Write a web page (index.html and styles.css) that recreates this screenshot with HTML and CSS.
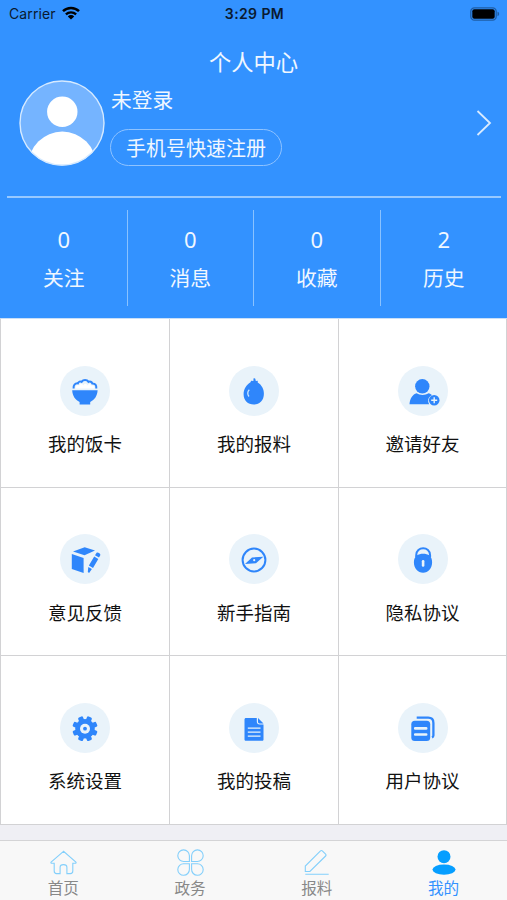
FILE: index.html
```html
<!DOCTYPE html>
<html lang="zh-CN">
<head>
    <meta charset="UTF-8">
    <meta name="viewport" content="width=device-width, initial-scale=1.0">
    <title>个人中心</title>
    <link rel="stylesheet" href="styles.css">
</head>
<body>
    <!-- 顶部个人信息 -->
    <header class="header">
        <div class="status-bar">
            <div class="status-left">
                <span>Carrier</span>
                <svg class="wifi" viewBox="0 0 18 14">
                    <path d="M1 5.2a11.4 11.4 0 0 1 16 0" fill="none" stroke="#000" stroke-width="2.5"/>
                    <path d="M3.9 8.4a7.3 7.3 0 0 1 10.2 0" fill="none" stroke="#000" stroke-width="2.3"/>
                    <path d="M9 13.6l-3.2-3.2a4.6 4.6 0 0 1 6.4 0z"/>
                </svg>
            </div>
            <span class="status-time">3:29 PM</span>
            <svg class="battery" viewBox="0 0 30 14">
                <rect x=".8" y=".8" width="25.4" height="12.4" rx="3.6" fill="none" stroke="#1f5da5" stroke-width="1.3"/>
                <rect x="2.3" y="2.3" width="22.4" height="9.4" rx="2"/>
                <path d="M27.5 4.8c2.2.6 2.2 3.8 0 4.4z" fill="#1f5da5"/>
            </svg>
        </div>
        <h1 class="page-title">个人中心</h1>
        <div class="profile">
            <svg class="avatar" viewBox="0 0 86 86">
                <defs>
                    <clipPath id="avatarClip"><circle cx="43" cy="43" r="42.5"/></clipPath>
                </defs>
                <circle cx="43" cy="43" r="42" fill="#75b4ff"/>
                <g clip-path="url(#avatarClip)" fill="#fff">
                    <circle cx="43.3" cy="31.8" r="15.2"/>
                    <ellipse cx="43.3" cy="86" rx="34" ry="34.5"/>
                </g>
                <circle cx="43" cy="43" r="42" fill="none" stroke="#d6eaff" stroke-width="1.4"/>
            </svg>
            <div class="profile-info">
                <p class="profile-name">未登录</p>
                <a href="#" class="register-btn">手机号快速注册</a>
            </div>
            <svg class="arrow" viewBox="0 0 16 26">
                <path d="M1.5 1L14 13 1.5 25" fill="none" stroke="#d9ebff" stroke-width="1.8"/>
            </svg>
        </div>
        <div class="stats">
            <div class="stat"><span class="stat-num">0</span><span>关注</span></div>
            <div class="stat"><span class="stat-num">0</span><span>消息</span></div>
            <div class="stat"><span class="stat-num">0</span><span>收藏</span></div>
            <div class="stat"><span class="stat-num">2</span><span>历史</span></div>
        </div>
    </header>

    <!-- 功能九宫格 -->
    <main class="menu-grid">
        <a href="#" class="menu-item">
            <svg class="menu-icon" viewBox="0 0 50 50">
                <path d="M12.2 24.2h25.4c-.2 5.5-3 9.7-7.4 11.7v2.7H19.6v-2.7c-4.4-2-7.2-6.2-7.4-11.7z"/>
                <path d="M13.6 22.5c-.3-3.5 1.3-5.4 4.3-5.1.6-1.8 2.4-2.3 3.7-1.5 1.7-2.4 5.3-2.4 6.9 0 1.5-.8 3.2-.1 3.8 1.5 2.9-.2 4.3 1.9 4 5.1" fill="none" stroke="#2f86fb" stroke-width="2"/>
                <path d="M15.5 22.5c0-3 2-4.5 3.8-3 1-2.5 3-2.5 4 0 1-2.5 3.3-2.5 4.2 0 1.5-2.5 3.5-1.5 4 .3 1.7-.8 3 .7 3 2.7z" fill="#fff"/>
            </svg>
            <span>我的饭卡</span>
        </a>
        <a href="#" class="menu-item">
            <svg class="menu-icon" viewBox="0 0 50 50">
                <path d="M24.5 12.6c.6-.5 1.5-.4 1.8.2l.5 2.2 2-.3-.1 1.9c4 2.4 6.2 6.6 6.2 11.1 0 6.5-4.2 10.8-10.1 10.8s-10.2-4.2-10.2-10.3c0-5.3 2.9-9.6 6.9-12l.6-1.5 2.3.3z"/>
                <path d="M20.3 23.7c-2 1.6-2 4.9-.3 6.8" fill="none" stroke="#cfe8ff" stroke-width="1.3"/>
            </svg>
            <span>我的报料</span>
        </a>
        <a href="#" class="menu-item">
            <svg class="menu-icon" viewBox="0 0 50 50">
                <circle cx="24.3" cy="20.3" r="7.2"/>
                <path d="M11.5 38.3c.3-5.9 3.2-9.9 7.2-11 3.6 2.3 8.2 2.3 11.8 0 1.5.4 2.5 1 3.5 2-4.2 1.7-4.6 5.8-2.8 9z"/>
                <circle cx="36.2" cy="34.2" r="5.3"/>
                <path d="M36.2 31.2v6M33.2 34.2h6" stroke="#e9f3fa" stroke-width="1.4"/>
            </svg>
            <span>邀请好友</span>
        </a>
        <a href="#" class="menu-item">
            <svg class="menu-icon" viewBox="0 0 50 50">
                <path d="M13 17.5l11.7-4.3 10.3 3.4-10.5 4.6z"/>
                <path d="M11.8 20l11.8 4v15l-11.8-4z"/>
                <path d="M36.6 18.8c1.2-.8 3.8.7 3.8 2.2l-1.4 2.6-4-2.3zM34.2 22.5l4.1 2.4-5.3 9-4.1-2.4zM28.3 33l3.6 2.1-2.8 3.8-1.3-.8z"/>
            </svg>
            <span>意见反馈</span>
        </a>
        <a href="#" class="menu-item">
            <svg class="menu-icon" viewBox="0 0 50 50">
                <circle cx="25" cy="26" r="11.4" fill="none" stroke="#2f86fb" stroke-width="2"/>
                <path d="M16 29.9l7-6.5 11.3-.7-7.3 6.5z"/>
                <circle cx="25.2" cy="26.2" r="1.1" fill="#e9f3fa"/>
            </svg>
            <span>新手指南</span>
        </a>
        <a href="#" class="menu-item">
            <svg class="menu-icon" viewBox="0 0 50 50">
                <path d="M18.2 23v-1.7c0-9.3 13.9-9.3 13.9 0V23" fill="none" stroke="#2f86fb" stroke-width="2"/>
                <path d="M18.5 21.6c4-2.4 9.3-2.4 13.3 0 1.5 1.7 2.3 4 2.3 6.7 0 6.3-3.8 10.4-9 10.4s-9.2-4.1-9.2-10.4c0-2.7.9-5 2.6-6.7z"/>
                <rect x="23.8" y="26" width="2.6" height="6.8" rx="1.2" fill="#e9f3fa"/>
            </svg>
            <span>隐私协议</span>
        </a>
        <a href="#" class="menu-item">
            <svg class="menu-icon" viewBox="0 0 50 50">
                <g transform="translate(25 25.7)">
                    <circle r="9.8"/>
                    <rect x="-2.6" y="-12.7" width="5.2" height="25.4" rx="1.3" transform="rotate(22.5)"/>
                    <rect x="-2.6" y="-12.7" width="5.2" height="25.4" rx="1.3" transform="rotate(67.5)"/>
                    <rect x="-2.6" y="-12.7" width="5.2" height="25.4" rx="1.3" transform="rotate(112.5)"/>
                    <rect x="-2.6" y="-12.7" width="5.2" height="25.4" rx="1.3" transform="rotate(157.5)"/>
                    <circle r="5" fill="#e9f3fa"/>
                    <circle r="1.9"/>
                </g>
            </svg>
            <span>系统设置</span>
        </a>
        <a href="#" class="menu-item">
            <svg class="menu-icon" viewBox="0 0 50 50">
                <path d="M17 15h10.8v3.5c0 2 1 3 3 3h3.7v15c0 .8-.5 1.3-1.3 1.3H17c-.8 0-1.5-.5-1.5-1.3V16.5c0-.9.6-1.5 1.5-1.5z"/>
                <path d="M29 15l5.5 5.5h-4c-.9 0-1.5-.5-1.5-1.4z"/>
                <path d="M18.8 25.2h12.7M18.8 29.2h12.7M18.8 33.2h12.7" stroke="#e9f3fa" stroke-width="1.2"/>
            </svg>
            <span>我的投稿</span>
        </a>
        <a href="#" class="menu-item">
            <svg class="menu-icon" viewBox="0 0 50 50">
                <path d="M18.7 14.7h11.5c3.3 0 5.2 1.9 5.2 5.2v12.5c0 1-.5 1.6-1.4 2" fill="none" stroke="#2f86fb" stroke-width="2.3"/>
                <rect x="13.3" y="17.7" width="18.9" height="20.4" rx="3.5"/>
                <path d="M17.2 25.4h11M17.2 31.5h11" stroke="#e9f3fa" stroke-width="2.6" stroke-linecap="round"/>
            </svg>
            <span>用户协议</span>
        </a>
    </main>

    <!-- 底部导航 -->
    <nav class="tab-bar">
        <a href="#" class="tab">
            <svg class="tab-icon" viewBox="0 0 28 28">
                <path d="M14.5 2.3L2.1 13c-.5.8-.1 1.3.8 1.3h2.3V22c0 1.8.8 2.6 2.4 2.6h3.5v-6.3c0-3.6 6.8-3.6 6.8 0v6.3h3.5c1.6 0 2.4-.8 2.4-2.6v-7.7h2.3c.9 0 1.3-.5.8-1.3z"/>
            </svg>
            <span>首页</span>
        </a>
        <a href="#" class="tab">
            <svg class="tab-icon" viewBox="0 0 28 28">
                <path d="M13.4 12.5H7.8a5.8 5.8 0 1 1 5.6-5.8zM15.6 12.5V6.7a5.8 5.8 0 1 1 5.6 5.8zM13.4 14.7v5.6a5.8 5.8 0 1 1-5.6-5.6zM15.6 14.7h5.6a5.8 5.8 0 1 1-5.6 5.6z"/>
            </svg>
            <span>政务</span>
        </a>
        <a href="#" class="tab">
            <svg class="tab-icon" viewBox="0 0 28 28">
                <path d="M2.3 22.5V17L17.5 1.9c.6-.6 1.2-.6 1.8 0l3.3 3.3c.6.6.6 1.2 0 1.8L6.9 22.5zM2.3 25.3h23.4"/>
            </svg>
            <span>报料</span>
        </a>
        <a href="#" class="tab active">
            <svg class="tab-icon" viewBox="0 0 28 28">
                <circle cx="14" cy="7.7" r="6.5"/>
                <ellipse cx="14" cy="20.6" rx="11.5" ry="5.1"/>
            </svg>
            <span>我的</span>
        </a>
    </nav>
</body>
</html>
```
FILE: styles.css
```css
* { margin: 0; padding: 0; box-sizing: border-box; }
body { height: 900px; display: flex; flex-direction: column; background: #efeff4; font-family: 'Noto Sans CJK SC', sans-serif; overflow: hidden; }
a { text-decoration: none; color: inherit; }
svg { display: block; flex-shrink: 0; overflow: visible; }

/* 头部 */
.header { height: 318px; flex-shrink: 0; background: #3392ff; color: #f0f7ff; }

.status-bar { height: 28px; padding: 0 7px 0 9px; display: grid; grid-template-columns: 1fr auto 1fr; align-items: center; color: #0a1a30; font-family: Inter, sans-serif; font-size: 14px; line-height: 28px; }
.status-left { display: flex; align-items: center; gap: 6px; letter-spacing: 0.1px; }
.status-time { font-weight: 600; letter-spacing: 0.4px; }
.wifi { width: 18px; height: 14px; margin-top: -2px; }
.battery { width: 30px; height: 14px; margin-top: -1px; justify-self: end; }

.page-title { height: 50px; line-height: 66px; text-align: center; font-size: 22.3px; font-weight: 400; }

.profile { height: 120px; margin: 0 6px 0 7px; padding: 2px 9px 0 12px; display: flex; align-items: flex-start; border-bottom: 2px solid #98c9ff; }
.avatar { width: 86px; height: 86px; }
.profile-info { flex: 1; margin-left: 5px; }
.profile-name { height: 49px; padding-left: 1px; line-height: 38px; font-size: 20.7px; }
.register-btn { display: inline-block; height: 37px; width: 172px; border: 1px solid #8fc3ff; border-radius: 19px; line-height: 35px; text-align: center; font-size: 20px; }
.arrow { width: 16px; height: 26px; margin-top: 30px; }

/* 数据统计 */
.stats { height: 97px; margin-top: 12px; padding-left: 1px; display: grid; grid-template-columns: repeat(4, 1fr); }
.stat { height: 96px; padding-top: 10px; display: flex; flex-direction: column; align-items: center; font-size: 20.8px; line-height: 38px; border-right: 1px solid #8ac2ff; }
.stat:last-child { border-right: none; }
.stat-num { font-family: 'Noto Sans', sans-serif; font-size: 22px; }

/* 九宫格 */
.menu-grid { height: 507px; flex-shrink: 0; display: grid; grid-template-columns: 169px 169px 1fr; grid-template-rows: repeat(3, 1fr); border-left: 1px solid #d2d2d4; border-top: 1px solid #c9dff8; background: #fff; }
.menu-item { padding-top: 46.5px; display: flex; flex-direction: column; align-items: center; border-right: 1px solid #d2d2d4; border-bottom: 1px solid #d2d2d4; color: #111; font-size: 18.5px; line-height: 28px; }
.menu-icon { width: 50px; height: 50px; margin-bottom: 13.5px; border-radius: 50%; background: #e9f3fa; fill: #2f86fb; }

/* 底部导航 */
.tab-bar { height: 60px; margin-top: auto; display: grid; grid-template-columns: repeat(4, 1fr); border-top: 1px solid #d4d4d6; background: #f8f8f8; }
.tab { padding-top: 8px; display: flex; flex-direction: column; align-items: center; color: #888; font-size: 15.6px; line-height: 20px; }
.tab-icon { width: 28px; height: 28px; fill: none; stroke: #83cffb; stroke-width: 1.1; }
.tab.active { color: #3392ff; }
.tab.active .tab-icon { fill: #069eff; stroke: none; }
```
